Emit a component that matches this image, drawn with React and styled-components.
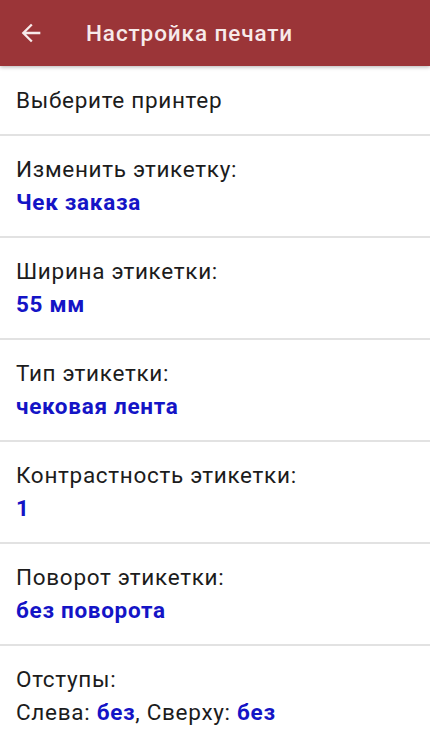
import React from 'react';
import styled, { createGlobalStyle } from 'styled-components';

const GlobalStyle = createGlobalStyle`
  body {
    margin: 0;
    background: #ffffff;
    font-family: Roboto, "Noto Sans", Arial, sans-serif;
  }
`;

const settings = [
  { label: 'Изменить этикетку:', value: 'Чек заказа' },
  { label: 'Ширина этикетки:', value: '55 мм' },
  { label: 'Тип этикетки:', value: 'чековая лента' },
  { label: 'Контрастность этикетки:', value: '1' },
  { label: 'Поворот этикетки:', value: 'без поворота' },
];

export default function App() {
  return (
    <>
      <GlobalStyle />
      <Screen>
        <Toolbar>
          <BackButton aria-label="назад">
            <svg width="28" height="28" viewBox="0 0 24 24" fill="currentColor">
              <path d="M20 11H7.83l5.59-5.59L12 4l-8 8 8 8 1.41-1.41L7.83 13H20v-2z" />
            </svg>
          </BackButton>
          <Title>Настройка печати</Title>
        </Toolbar>

        <List>
          <Row $single>
            <Label>Выберите принтер</Label>
          </Row>
          {settings.map((s) => (
            <Row key={s.label}>
              <Label>{s.label}</Label>
              <Value>{s.value}</Value>
            </Row>
          ))}
          <Row $last>
            <Label>Отступы:</Label>
            <Label>
              Слева: <Value as="span">без</Value>, Сверху: <Value as="span">без</Value>
            </Label>
          </Row>
        </List>
      </Screen>
    </>
  );
}

const Screen = styled.div`
  display: flex;
  flex-direction: column;
  min-height: 100vh;
  background: #ffffff;
`;

const Toolbar = styled.header`
  position: relative;
  z-index: 1;
  display: flex;
  align-items: center;
  height: 66px;
  padding-left: 17px;
  background: #9b3538;
  box-shadow: 0 1px 4px rgba(0, 0, 0, 0.3);
`;

const BackButton = styled.button`
  display: flex;
  align-items: center;
  justify-content: center;
  width: 28px;
  height: 28px;
  padding: 0;
  border: none;
  background: transparent;
  color: #f7eaea;
  cursor: pointer;
`;

const Title = styled.h1`
  margin: 0 0 0 41px;
  font-size: 22.5px;
  font-weight: 500;
  color: #f7eaea;
  letter-spacing: 0.9px;
`;

const List = styled.div`
  display: flex;
  flex-direction: column;
`;

const Row = styled.div`
  display: flex;
  flex-direction: column;
  padding: 17px 16px;
  border-bottom: ${({ $last }) => ($last ? 'none' : '2px solid #e2e2e2')};
  line-height: ${({ $single }) => ($single ? '34px' : '33px')};
`;

const Label = styled.div`
  font-size: 22.5px;
  color: #1c1c1c;
  letter-spacing: 0.7px;
`;

const Value = styled.div`
  font-size: 22.5px;
  font-weight: 700;
  color: #1414c6;
  letter-spacing: 0.7px;
`;
